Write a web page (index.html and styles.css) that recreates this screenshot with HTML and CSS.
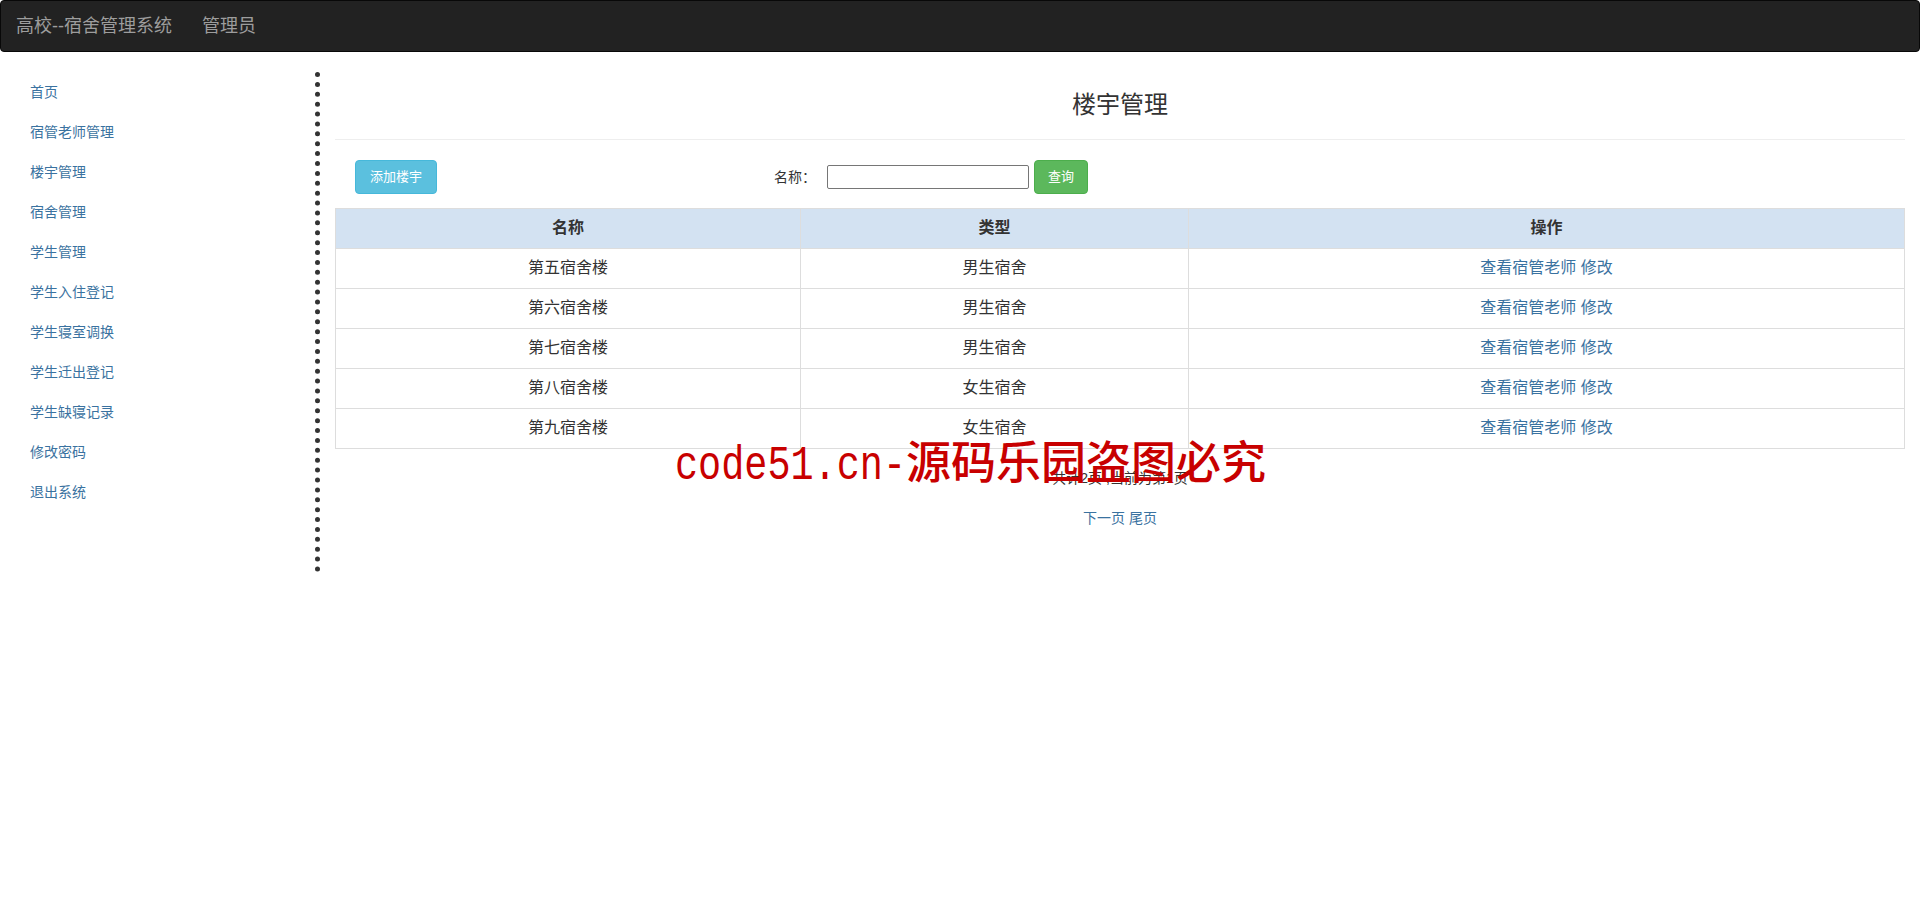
FILE: index.html
```html
<!DOCTYPE html>
<html lang="zh-CN">
<head>
<meta charset="utf-8">
<title>楼宇管理</title>
<link rel="stylesheet" href="styles.css">
</head>
<body>
<nav class="navbar">
  <a class="brand" href="#">高校--宿舍管理系统</a>
  <a class="brand" href="#">管理员</a>
</nav>
<div class="layout">
  <aside class="sidebar">
    <ul class="side-nav">
      <li><a href="#">首页</a></li>
      <li><a href="#">宿管老师管理</a></li>
      <li><a href="#">楼宇管理</a></li>
      <li><a href="#">宿舍管理</a></li>
      <li><a href="#">学生管理</a></li>
      <li><a href="#">学生入住登记</a></li>
      <li><a href="#">学生寝室调换</a></li>
      <li><a href="#">学生迁出登记</a></li>
      <li><a href="#">学生缺寝记录</a></li>
      <li><a href="#">修改密码</a></li>
      <li><a href="#">退出系统</a></li>
    </ul>
  </aside>
  <main class="main">
    <div class="page-header"><h3>楼宇管理</h3></div>
    <div class="toolbar">
      <button class="btn btn-info" type="button">添加楼宇</button>
      <form class="search">
        <label class="search-label">名称：</label>
        <input class="search-input" type="text">
        <button class="btn btn-success" type="button">查询</button>
      </form>
    </div>
    <table class="data-table">
      <colgroup>
        <col class="c1"><col class="c2"><col>
      </colgroup>
      <thead>
        <tr><th>名称</th><th>类型</th><th>操作</th></tr>
      </thead>
      <tbody>
        <tr><td>第五宿舍楼</td><td>男生宿舍</td><td><a href="#">查看宿管老师</a> <a href="#">修改</a></td></tr>
        <tr><td>第六宿舍楼</td><td>男生宿舍</td><td><a href="#">查看宿管老师</a> <a href="#">修改</a></td></tr>
        <tr><td>第七宿舍楼</td><td>男生宿舍</td><td><a href="#">查看宿管老师</a> <a href="#">修改</a></td></tr>
        <tr><td>第八宿舍楼</td><td>女生宿舍</td><td><a href="#">查看宿管老师</a> <a href="#">修改</a></td></tr>
        <tr><td>第九宿舍楼</td><td>女生宿舍</td><td><a href="#">查看宿管老师</a> <a href="#">修改</a></td></tr>
      </tbody>
    </table>
    <div class="pager">
      <div class="pager-info">共计2页 ,当前为第1页</div>
      <div class="pager-links"><a href="#">下一页</a> <a href="#">尾页</a></div>
    </div>
  </main>
</div>
<div class="watermark"><span class="wm-latin">code51.cn-</span>源码乐园盗图必究</div>
</body>
</html>
```
FILE: styles.css
```css
* { box-sizing: border-box; }

html, body {
  margin: 0;
  padding: 0;
}

body {
  font-family: "Liberation Sans", "Noto Sans CJK SC", sans-serif;
  font-size: 14px;
  line-height: 20px;
  color: #333;
  background: #fff;
  position: relative;
  width: 1920px;
  height: 902px;
}

a {
  color: #3a72a0;
  text-decoration: none;
}

.navbar {
  display: flex;
  height: 52px;
  background: #222;
  border: 1px solid #080808;
  border-radius: 4px;
  margin-bottom: 20px;
}

.brand {
  display: block;
  height: 50px;
  padding: 15px;
  font-size: 18px;
  line-height: 20px;
  color: #9d9d9d;
}

.layout {
  display: flex;
  align-items: flex-start;
}

.sidebar {
  width: 320px;
  height: 500px;
  padding: 0 15px;
  border-right: 5px dotted #333;
  flex: none;
}

.side-nav {
  list-style: none;
  margin: 0;
  padding: 0;
}

.side-nav a {
  display: block;
  padding: 10px 15px;
  font-size: 14px;
  line-height: 20px;
  color: #3a72a0;
}

.main {
  flex: 1;
  padding: 20px 15px 0 15px;
}

.page-header {
  padding-bottom: 21px;
  border-bottom: 1px solid #eee;
}

.page-header h3 {
  margin: 0;
  font-size: 24px;
  line-height: 26px;
  font-weight: 400;
  text-align: center;
  color: #333;
}

.toolbar {
  display: flex;
  align-items: center;
  height: 34px;
  margin-top: 20px;
  padding-left: 20px;
}

.btn {
  height: 34px;
  border-radius: 4px;
  font-family: inherit;
  font-size: 13px;
  line-height: 20px;
  color: #fff;
  cursor: pointer;
}

.btn-info {
  padding: 0 14px;
  background: #5bc0de;
  border: 1px solid #46b8da;
}

.btn-success {
  padding: 0 13px;
  background: #5cb85c;
  border: 1px solid #4cae4c;
  margin-left: 5px;
}

.search {
  display: flex;
  align-items: center;
  margin: 0 0 0 337px;
}

.search-label {
  font-size: 14px;
  margin-right: 11px;
}

.search-input {
  width: 202px;
  height: 24px;
  padding: 1px 2px;
  border: 1px solid #767676;
  border-radius: 2px;
  font-size: 13px;
}

.data-table {
  width: 100%;
  margin-top: 14px;
  border-collapse: collapse;
  table-layout: fixed;
  font-size: 16px;
}

.data-table col.c1 { width: 465px; }
.data-table col.c2 { width: 388px; }

.data-table th,
.data-table td {
  height: 40px;
  padding: 0 8px 1px;
  border: 1px solid #ddd;
  text-align: center;
  vertical-align: middle;
  line-height: 20px;
}

.data-table th {
  background: #d3e2f2;
  font-weight: 700;
  color: #333;
}

.data-table td {
  color: #333;
}

.pager {
  text-align: center;
  margin-top: 19px;
}

.pager-info {
  font-size: 14px;
  line-height: 20px;
  color: #333;
}

.pager-links {
  margin-top: 20px;
  font-size: 14px;
  line-height: 20px;
}

.watermark {
  position: absolute;
  left: 675px;
  top: 437px;
  font-family: "Noto Sans CJK SC", sans-serif;
  font-size: 45px;
  line-height: 45px;
  font-weight: 500;
  color: #c80000;
  white-space: nowrap;
  pointer-events: none;
}

.wm-latin {
  display: inline-block;
  font-family: "Liberation Mono", monospace;
  font-size: 38.5px;
  transform: scale(1, 1.25);
  transform-origin: 50% 70%;
}
```
